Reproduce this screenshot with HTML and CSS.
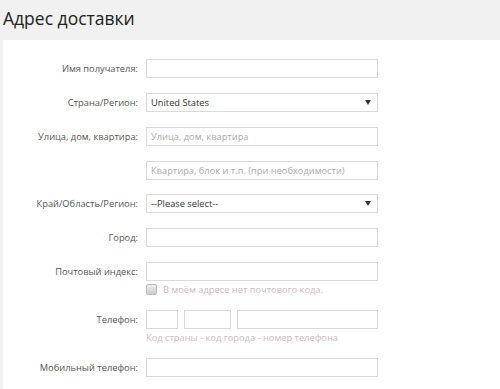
FILE: index.html
```html
<!DOCTYPE html>
<html lang="ru">
<head>
    <meta charset="UTF-8">
    <title>Адрес доставки</title>
    <link rel="stylesheet" href="styles.css">
</head>
<body>
    <h1 class="page-title">Адрес доставки</h1>

    <form class="address-form">
        <div class="form-row">
            <label class="form-label">Имя получателя:</label>
            <div class="form-field"><input type="text" class="text-input"></div>
        </div>

        <div class="form-row">
            <label class="form-label">Страна/Регион:</label>
            <div class="form-field">
                <div class="select-box">
                    <span>United States</span>
                    <span class="arrow"></span>
                </div>
            </div>
        </div>

        <div class="form-row">
            <label class="form-label">Улица, дом, квартира:</label>
            <div class="form-field"><input type="text" class="text-input" placeholder="Улица, дом, квартира"></div>
        </div>

        <div class="form-row">
            <label class="form-label"></label>
            <div class="form-field"><input type="text" class="text-input" placeholder="Квартира, блок и т.п. (при необходимости)"></div>
        </div>

        <div class="form-row">
            <label class="form-label">Край/Область/Регион:</label>
            <div class="form-field">
                <div class="select-box">
                    <span>--Please select--</span>
                    <span class="arrow"></span>
                </div>
            </div>
        </div>

        <div class="form-row">
            <label class="form-label">Город:</label>
            <div class="form-field"><input type="text" class="text-input"></div>
        </div>

        <div class="form-row">
            <label class="form-label">Почтовый индекс:</label>
            <div class="form-field">
                <input type="text" class="text-input">
                <div class="field-note">
                    <span class="checkbox"></span>
                    В моём адресе нет почтового кода.
                </div>
            </div>
        </div>

        <div class="form-row">
            <label class="form-label">Телефон:</label>
            <div class="form-field">
                <div class="phone-group">
                    <input type="text" class="text-input phone-country">
                    <input type="text" class="text-input phone-city">
                    <input type="text" class="text-input phone-number">
                </div>
                <div class="field-note">Код страны - код города - номер телефона</div>
            </div>
        </div>

        <div class="form-row">
            <label class="form-label">Мобильный телефон:</label>
            <div class="form-field"><input type="text" class="text-input"></div>
        </div>
    </form>
</body>
</html>
```

FILE: styles.css
```css
:root {
    --bg-page: #f1f1f1;
    --text-dark: #333;
    --label-color: #555;
    --input-border: #d9d9d9;
    --placeholder: #aaa;
    --note-color: #cdbcb8;
    --small-text: 9.3px;
}

body {
    margin: 0;
    padding: 0;
    background-color: var(--bg-page);
    font-family: "Open Sans", "Segoe UI", sans-serif;
    color: var(--text-dark);
    height: 100vh;
    display: flex;
    flex-direction: column;
    overflow: hidden;
}

.page-title {
    flex-shrink: 0;
    margin: 0;
    height: 40px;
    padding-left: 3px;
    font-size: 17.5px;
    font-weight: normal;
    line-height: 36px;
    color: #222;
}

.address-form {
    flex: 1;
    min-height: 0;
    margin-left: 3px;
    background-color: #fff;
    padding-top: 19px;
}

.form-row {
    display: flex;
    align-items: flex-start;
    margin-bottom: 14px;
}

.form-label {
    width: 135px;
    padding-right: 8px;
    text-align: right;
    font-size: var(--small-text);
    line-height: 20px;
    color: var(--label-color);
}

.form-field {
    width: 232px;
}

.text-input,
.select-box {
    box-sizing: border-box;
    width: 232px;
    height: 19px;
    margin: 0;
    padding: 0 4px;
    border: 1px solid var(--input-border);
    border-radius: 0;
    background: #fff;
    font-family: inherit;
    font-size: var(--small-text);
    color: var(--text-dark);
    outline: none;
    display: block;
}

.text-input::placeholder {
    color: var(--placeholder);
}

.select-box {
    display: flex;
    align-items: center;
    justify-content: space-between;
    padding-right: 6px;
}

.select-box .arrow {
    width: 0;
    height: 0;
    border-left: 3px solid transparent;
    border-right: 3px solid transparent;
    border-top: 5px solid #333;
}

.field-note {
    display: flex;
    align-items: center;
    gap: 6px;
    height: 14px;
    margin-top: 1px;
    font-size: var(--small-text);
    color: var(--note-color);
}

.checkbox {
    box-sizing: border-box;
    width: 11px;
    height: 11px;
    border: 1px solid #bbb;
    border-radius: 2px;
    background: linear-gradient(#eee, #ccc);
}

.phone-group {
    display: flex;
    gap: 6px;
}

.phone-country {
    width: 32px;
}

.phone-city {
    width: 47px;
}

.phone-number {
    flex: 1;
    width: auto;
}
```
